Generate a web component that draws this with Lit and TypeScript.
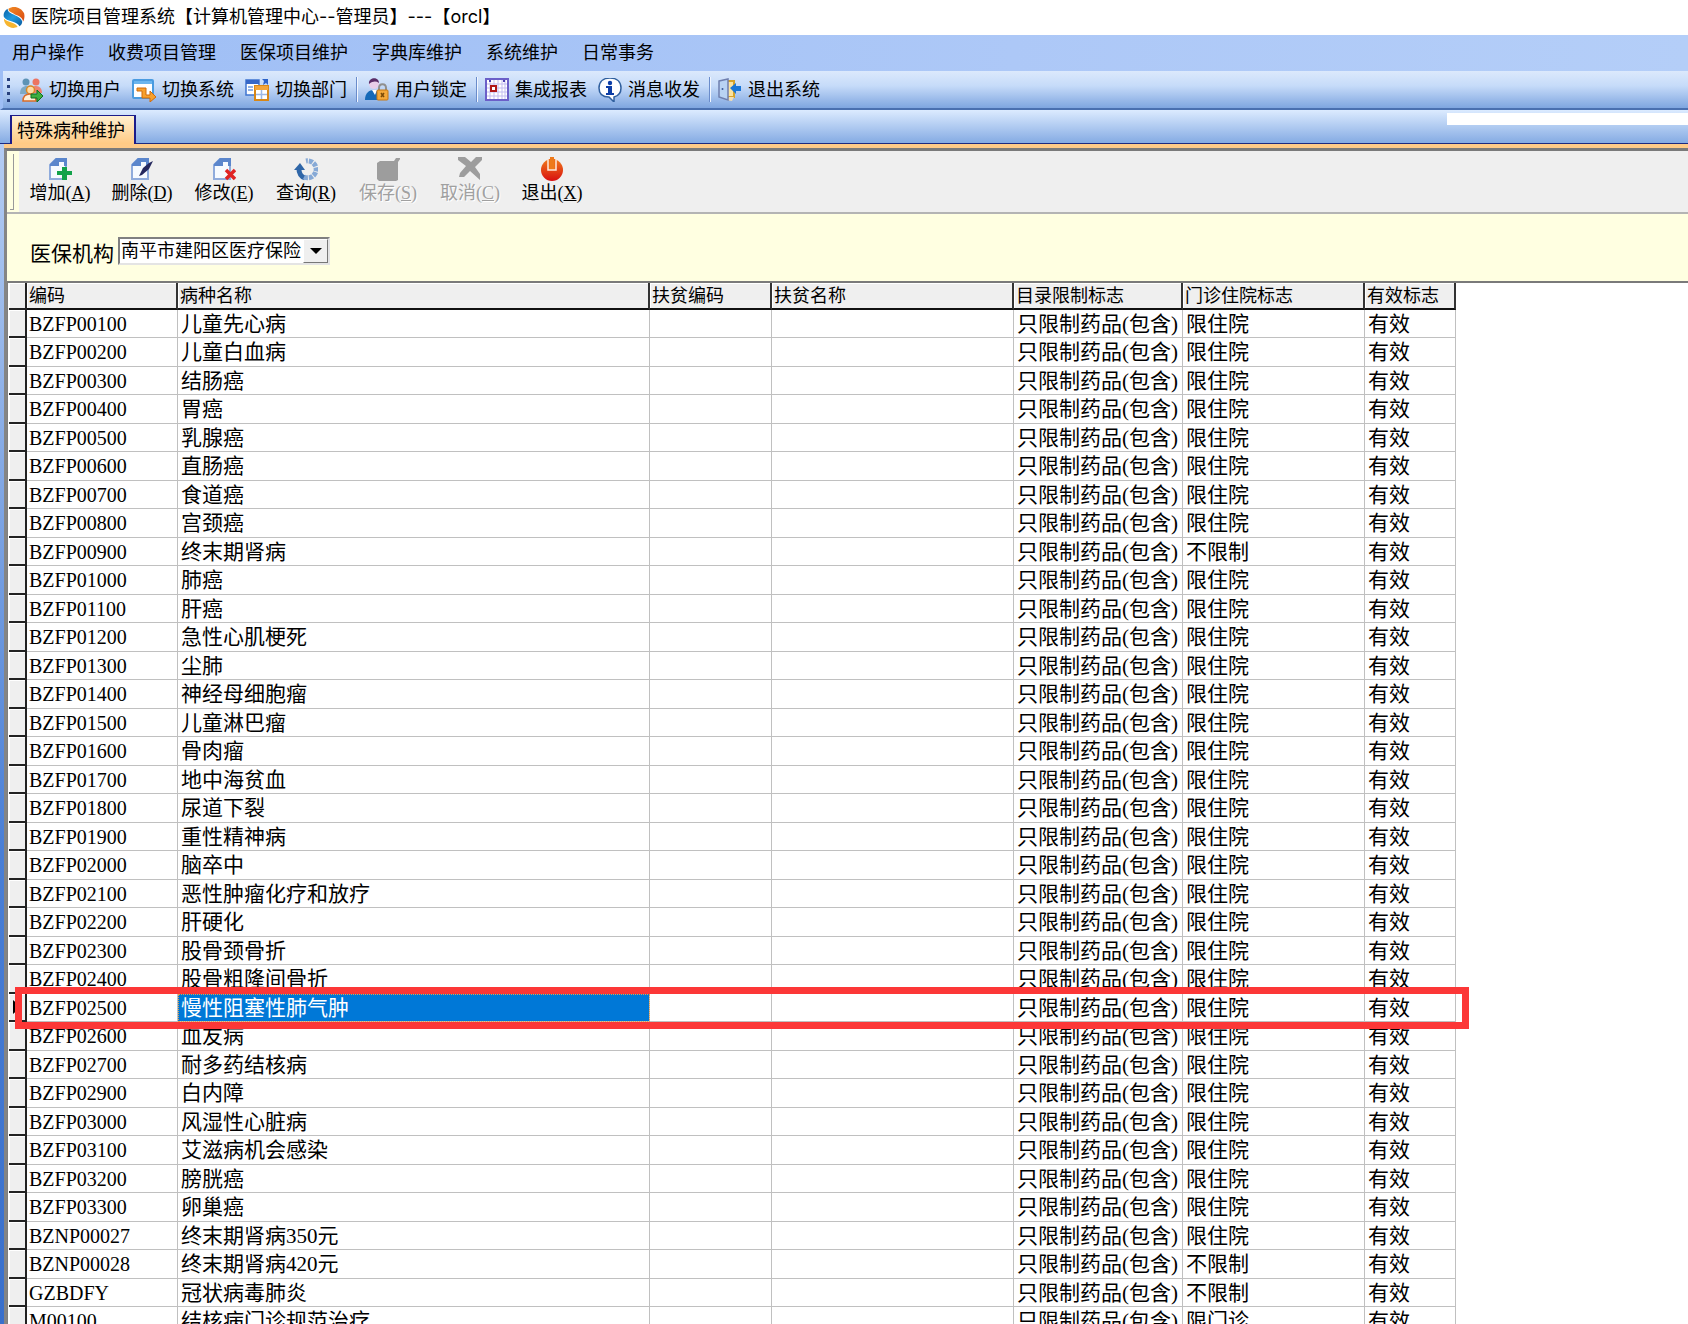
import { LitElement, html, css, svg, nothing } from "lit";
import { customElement, state } from "lit/decorators.js";
import { classMap } from "lit/directives/class-map.js";

type Row = [code: string, name: string, visit: string];

const IN = "限住院";
const ANY = "不限制";

const rows: Row[] = [
  ["BZFP00100", "儿童先心病", IN],
  ["BZFP00200", "儿童白血病", IN],
  ["BZFP00300", "结肠癌", IN],
  ["BZFP00400", "胃癌", IN],
  ["BZFP00500", "乳腺癌", IN],
  ["BZFP00600", "直肠癌", IN],
  ["BZFP00700", "食道癌", IN],
  ["BZFP00800", "宫颈癌", IN],
  ["BZFP00900", "终末期肾病", ANY],
  ["BZFP01000", "肺癌", IN],
  ["BZFP01100", "肝癌", IN],
  ["BZFP01200", "急性心肌梗死", IN],
  ["BZFP01300", "尘肺", IN],
  ["BZFP01400", "神经母细胞瘤", IN],
  ["BZFP01500", "儿童淋巴瘤", IN],
  ["BZFP01600", "骨肉瘤", IN],
  ["BZFP01700", "地中海贫血", IN],
  ["BZFP01800", "尿道下裂", IN],
  ["BZFP01900", "重性精神病", IN],
  ["BZFP02000", "脑卒中", IN],
  ["BZFP02100", "恶性肿瘤化疗和放疗", IN],
  ["BZFP02200", "肝硬化", IN],
  ["BZFP02300", "股骨颈骨折", IN],
  ["BZFP02400", "股骨粗隆间骨折", IN],
  ["BZFP02500", "慢性阻塞性肺气肿", IN],
  ["BZFP02600", "血友病", IN],
  ["BZFP02700", "耐多药结核病", IN],
  ["BZFP02900", "白内障", IN],
  ["BZFP03000", "风湿性心脏病", IN],
  ["BZFP03100", "艾滋病机会感染", IN],
  ["BZFP03200", "膀胱癌", IN],
  ["BZFP03300", "卵巢癌", IN],
  ["BZNP00027", "终末期肾病350元", IN],
  ["BZNP00028", "终末期肾病420元", ANY],
  ["GZBDFY", "冠状病毒肺炎", ANY],
  ["M00100", "结核病门诊规范治疗", "限门诊"],
];

const columns = ["编码", "病种名称", "扶贫编码", "扶贫名称", "目录限制标志", "门诊住院标志", "有效标志"];
const menus = ["用户操作", "收费项目管理", "医保项目维护", "字典库维护", "系统维护", "日常事务"];

const icons = {
  logo: svg`
    <defs>
      <linearGradient id="lo" x1="0" y1="0" x2="1" y2="1"><stop offset="0" stop-color="#f08a24"/><stop offset="1" stop-color="#d94a12"/></linearGradient>
      <linearGradient id="lb" x1="0" y1="0" x2="1" y2="1"><stop offset="0" stop-color="#0a63a8"/><stop offset=".5" stop-color="#1f9be0"/><stop offset="1" stop-color="#0a5a9e"/></linearGradient>
    </defs>
    <path d="M6 3C11-1 20 1 23 8c1 4 0 7-1 9C21 11 15 11 11 8 8 6 6 6 6 3z" fill="url(#lo)"/>
    <path d="M5 3c0 7 14 6 16 14 0 2-1 4-3 5C15 16 5 18 1 12 0 8 2 5 5 3z" fill="url(#lb)"/>
    <path d="M1 14c4 4 13 4 15 9C8 26 1 21 1 14z" fill="#f6b530"/>`,
  users: svg`
    <circle cx="7" cy="4" r="3.500" fill="#5d93b5"/><circle cx="17" cy="4" r="3.500" fill="#ec7461"/>
    <path d="M1 16c0-6 3-8 7-8 3 0 4 2 4 4l-2 4z" fill="#7da9c4"/><path d="M12 12c0-3 2-4 5-4 4 0 6 3 6 7h-8z" fill="#ee8270"/>
    <circle cx="11.500" cy="12" r="4" fill="#ffdca6" stroke="#d98825" stroke-width="1.500"/>
    <path d="M4 23c0-5 3-7 7-7s6 2 6 7z" fill="#fff1d8" stroke="#d96c28" stroke-width="1.500"/>
    <path d="M12 16h6v-4l6 6-6 6v-4h-6z" fill="#3fae3f" stroke="#0f6f22"/>`,
  system: svg`
    <rect x="1" y="2" width="20" height="18" rx="1" fill="#fff" stroke="#4a9be0" stroke-width="2"/><path d="M2 3h18v3H2z" fill="#6bb5ee"/>
    <path d="M5 10h9v7h4v-4l6 6-6 5v-4h-8v-7H5z" fill="#f7a02c" stroke="#cf6a0c"/>`,
  dept: svg`
    <rect x="1" y="2" width="13" height="15" fill="#fff" stroke="#3f74d0" stroke-width="1.500"/><path d="M1 2h13v4H1z" fill="#3667c7"/>
    <path d="M3 9h5M3 12h5" stroke="#6f9be0" stroke-width="1.500"/><path d="M17 1h6v6l-2-2-3 2 1-4z" fill="#2c62c9"/>
    <rect x="10" y="8" width="13" height="14" fill="#fff" stroke="#d88717" stroke-width="2"/><path d="M10 8h13v4H10z" fill="#f3a53a"/>
    <path d="M16.500 12v9M11 16.500h11" stroke="#9db8e4" stroke-width="1.500"/>`,
  lock: svg`
    <circle cx="9" cy="6" r="5" fill="#e9cde8"/><path d="M4 6c-1-7 10-8 10-1-3-2-6-2-10 1z" fill="#5a2c66"/>
    <path d="M0 22c0-7 4-10 9-10s7 2 8 6v4z" fill="#1569b8"/><path d="M7 12h5l-2 5z" fill="#fff"/>
    <path d="M14 13v-3c0-5 7-5 7 0v3" fill="none" stroke="#8f8f8f" stroke-width="2"/>
    <rect x="12" y="12" width="11" height="10" rx="1" fill="#f3a83a" stroke="#c87812"/><path d="M16 15l3 4m0-4l-3 4" stroke="#7a4a08" stroke-width="1.500"/>`,
  report: svg`
    <rect x="1" y="1" width="22" height="21" fill="#fff" stroke="#6b5fc8" stroke-width="2"/>
    <path d="M5 2v19M9 2v19M13 2v19M17 2v19M20 2v19M2 6h20M2 10h20M2 14h20M2 18h20" stroke="#c3bdf0"/>
    <path d="M4 3h2M18 3h2" stroke="#4b3fb0" stroke-width="2"/><rect x="6" y="8" width="5" height="5" fill="#fff" stroke="#b01818" stroke-width="2"/>`,
  info: svg`
    <path d="M12 0c7 0 11 4 11 10s-3 8-7 9v5l-5-5C5 19 1 16 1 10S5 0 12 0z" fill="#fff" stroke="#2f5f9e" stroke-width="1.500"/>
    <circle cx="12" cy="5" r="2.200" fill="#0d3ea6"/><path d="M8 8h6v7h2v2H8v-2h2v-5H8z" fill="#0d3ea6"/>`,
  exitDoor: svg`
    <path d="M7 3h9v16H7z" fill="#fbe3a0" stroke="#d5a32a" stroke-width="2"/><path d="M8 22l3-3h5l-2 4z" fill="#f1dfb5"/>
    <path d="M1 3l9-2v21l-9-3z" fill="#b9d3f3" stroke="#6f7fae" stroke-width="1.500"/><circle cx="4.500" cy="11" r="1" fill="#3a5a9a"/>
    <path d="M12 10l6-5v3h5v5h-5v3z" fill="#1976d8"/>`,
  add: svg`
    <path d="M8 2h10v20H2V8z" fill="#f6faff" stroke="#8fabdc" stroke-width="2"/><path d="M8 1h11v8h-3V5h-5v4H2V7z" fill="#5b86cc"/>
    <path d="M14 10h5v4h5v4h-5v5h-5v-5H9v-4h5z" fill="#12a24a"/>`,
  edit: svg`
    <path d="M8 2h10v20H2V8z" fill="#f6faff" stroke="#8fabdc" stroke-width="2"/><path d="M8 1h11v8h-3V5h-5v4H2V7z" fill="#5b86cc"/>
    <path d="M23 4l-4 8-7 6-3 1 4-8 6-5z" fill="#25285e"/>`,
  remove: svg`
    <path d="M8 2h10v20H2V8z" fill="#f6faff" stroke="#8fabdc" stroke-width="2"/><path d="M8 1h11v8h-3V5h-5v4H2V7z" fill="#5b86cc"/>
    <path d="M14 13l9 9m0-9l-9 9" stroke="#e02424" stroke-width="3.500"/>`,
  query: svg`
    <path d="M11 21A9 9 0 0 1 5 12" fill="none" stroke="#2f66a8" stroke-width="5"/><path d="M0 13l6-7 5 7z" fill="#2f66a8"/>
    <path d="M10 20a8.500 8.500 0 1 0 2-16" fill="none" stroke="#86a9d6" stroke-width="5" stroke-dasharray="4 1"/>`,
  save: svg`<path d="M4 4h14l2-3h5l-3 4v18l-2 1H3l-2-2V6z" fill="#9d9d9d"/>`,
  cancel: svg`<path d="M0 0h7l6 5 5-5h7v2l-8 8 5 7v6l-10-9-6 6H1l1-4 6-7-8-6z" fill="#9d9d9d"/>`,
  power: svg`
    <defs><linearGradient id="pw" x1="0" y1="0" x2="0" y2="1"><stop offset="0" stop-color="#f07a1c"/><stop offset="1" stop-color="#d80f10"/></linearGradient></defs>
    <circle cx="12" cy="13" r="11" fill="url(#pw)"/><path d="M8 2v11h8V2" fill="#ef6e18" stroke="#ffe9dc" stroke-width="1.500"/><path d="M10 0h4v12h-4z" fill="#ee7a1a"/>`,
};

const icon = (name: keyof typeof icons) =>
  html`<svg class="icon" viewBox="0 0 24 24" aria-hidden="true">${icons[name]}</svg>`;

const tools: ([keyof typeof icons, string] | null)[] = [
  ["users", "切换用户"],
  ["system", "切换系统"],
  ["dept", "切换部门"],
  null,
  ["lock", "用户锁定"],
  null,
  ["report", "集成报表"],
  ["info", "消息收发"],
  null,
  ["exitDoor", "退出系统"],
];

const actions: { icon: keyof typeof icons; label: string; key: string; off?: boolean }[] = [
  { icon: "add", label: "增加", key: "A" },
  { icon: "edit", label: "删除", key: "D" },
  { icon: "remove", label: "修改", key: "E" },
  { icon: "query", label: "查询", key: "R" },
  { icon: "save", label: "保存", key: "S", off: true },
  { icon: "cancel", label: "取消", key: "C", off: true },
  { icon: "power", label: "退出", key: "X" },
];

@customElement("app-root")
export class AppRoot extends LitElement {
  @state() private selected = 24;

  static styles = css`
    :host {
      display: flex;
      flex-direction: column;
      height: 100vh;
      overflow: hidden;
      background: #fff;
      color: #000;
      font: 18px/24px "Liberation Serif", "Noto Sans CJK SC", sans-serif;
    }
    * { box-sizing: border-box; }
    button, select { font: inherit; color: inherit; margin: 0; padding: 0; border: 0; background: none; white-space: nowrap; }
    .icon { width: 24px; height: 24px; flex: none; display: block; }

    .title { display: flex; align-items: center; gap: 6px; height: 35px; padding: 0 0 2px 3px; flex: none; font-family: Inter, "Noto Sans CJK SC", sans-serif; }
    .title h1 { margin: 0; font-size: 18px; font-weight: 400; white-space: nowrap; }
    .title .icon { width: 22px; height: 22px; }

    .menu { display: flex; align-items: center; gap: 24px; height: 36px; padding: 0 12px; flex: none; background: linear-gradient(90deg, #9ebef5, #adc8f7 60%, #b4cef8); }

    .tools { display: flex; align-items: center; height: 39px; padding-left: 4px; flex: none; border-bottom: 2px solid #4a70b0; border-left: 3px solid #9ebef5; background: linear-gradient(#dce9fc, #c6dbf9 40%, #7fa6e0); }
    .grip { width: 3px; height: 24px; margin-right: 9px; background: repeating-linear-gradient(#27407e 0 3px, transparent 3px 7px); }
    .tool { display: flex; align-items: center; gap: 6px; }
    .tool + .tool { margin-left: 11px; }
    .sep { width: 2px; height: 25px; margin: 0 7px 0 9px; border-left: 1px solid #6a8ccb; border-right: 1px solid #f1f6ff; }

    .tabs { display: flex; align-items: flex-end; justify-content: space-between; height: 34px; padding-left: 10px; flex: none; border-bottom: 1px solid #1c2a80; background: linear-gradient(#dcebff, #85abe3); }
    .tab { height: 29px; padding: 2px 9px 0 5px; margin-bottom: -1px; border: 2px solid #1c1c8a; border-width: 1px 2px 0; background: linear-gradient(#fff0d0, #ffca84); }
    .strip { width: 241px; height: 12px; margin-bottom: 18px; background: #fff; }

    .frame { flex: 1; min-height: 0; display: flex; flex-direction: column; padding-left: 4px; background: linear-gradient(#b5cdf3, #4a7fd6 60%, #3a70cc); }
    .inner { flex: 1; min-height: 0; display: flex; flex-direction: column; border-left: 3px solid #858585; border-top: 3px solid #7a7a7a; }
    .band { height: 4px; flex: none; background: #ffcb88; }
    .actions { display: flex; height: 63px; flex: none; border-bottom: 2px solid #b4b4b4; background: #efefef; }
    .handle { width: 12px; padding: 3px 4px 3px 3px; background: #ffffe1; }
    .handle i { display: block; width: 4px; height: 56px; border-right: 1px solid #999; border-bottom: 1px solid #999; }
    .action { width: 82px; display: flex; flex-direction: column; align-items: center; padding-top: 6px; line-height: 20px; }
    .action span { white-space: nowrap; padding-top: 2px; }
    .action:disabled { color: #a0a0a0; text-shadow: 1px 1px #fff; }
    .filter { display: flex; align-items: center; height: 67px; padding-left: 23px; gap: 4px; flex: none; background: #ffffe1; }
    .filter label { font-size: 21px; padding-top: 12px; }
    .combo { position: relative; width: 212px; height: 28px; margin-top: 6px; border: 2px solid; border-color: #808080 #e4e4e4 #e4e4e4 #808080; background: #fff; }
    .combo select { width: 100%; height: 24px; padding-left: 1px; appearance: none; line-height: 24px; outline: 0; overflow: hidden; }
    .arrow { position: absolute; right: 0; top: 0; width: 25px; height: 24px; display: grid; place-items: center; pointer-events: none; background: #efefef; border: 1px solid; border-color: #fff #777 #777 #fff; }
    .arrow svg { width: 12px; height: 6px; }

    .grid { flex: 1; min-height: 0; overflow: auto; scrollbar-width: none; padding-left: 1px; border-top: 2px solid #7a7a7a; border-left: 1px solid #808080; background: #fff; }
    table { table-layout: fixed; border-collapse: separate; border-spacing: 0; width: 1447px; font-size: 21px; line-height: 26px; }
    .c0 { width: 18px; } .c1 { width: 151px; } .c2 { width: 472px; } .c3 { width: 122px; }
    .c4 { width: 242px; } .c5 { width: 169px; } .c6 { width: 182px; } .c7 { width: 91px; }
    th, td { padding: 0 0 0 3px; text-align: left; font-weight: 400; white-space: nowrap; overflow: hidden; }
    thead th { height: 27px; padding: 2px 0 0 2px; font-size: 18px; line-height: 23px; background: #efefef; border-right: 2px solid #333; border-bottom: 2px solid #111; box-shadow: inset 1px 1px #fff; }
    tbody tr { height: 28px; position: relative; }
    tbody tr:nth-child(even) { height: 29px; }
    tbody tr.on { z-index: 1; }
    td { border-right: 1px solid #c0c0c0; border-bottom: 1px solid #c0c0c0; }
    .code { font-size: 20px; padding-left: 2px; }
    .mark { padding: 0; background: #efefef; border-right: 2px solid #222; border-bottom: 2px solid #222; box-shadow: inset 1px 1px #fff; }
    .mark svg { display: block; width: 8px; height: 14px; margin-left: 4px; }
    .picked { background: #0078d7; color: #fff; outline: 1px dotted #e0a050; outline-offset: -1px; }
    .callout { position: absolute; left: 6px; right: -13px; top: -7px; bottom: -7px; border: 7px solid #fc3737; pointer-events: none; }
  `;

  render() {
    return html`
      <header class="title">${icon("logo")}<h1>医院项目管理系统【计算机管理中心--管理员】---【orcl】</h1></header>
      <nav class="menu">${menus.map((m) => html`<button>${m}</button>`)}</nav>
      <div class="tools">
        <span class="grip"></span>
        ${tools.map((t) => (t ? html`<button class="tool">${icon(t[0])}${t[1]}</button>` : html`<span class="sep"></span>`))}
      </div>
      <div class="tabs"><button class="tab">特殊病种维护</button><span class="strip"></span></div>
      <main class="frame">
        <div class="band"></div>
        <div class="inner">
          <div class="actions">
            <span class="handle"><i></i></span>
            ${actions.map((a) => html`
              <button class="action" ?disabled=${!!a.off}>${icon(a.icon)}<span>${a.label}(<u>${a.key}</u>)</span></button>`)}
          </div>
          <div class="filter">
            <label for="org">医保机构</label>
            <div class="combo">
              <select id="org"><option>南平市建阳区医疗保险</option></select>
              <span class="arrow"><svg viewBox="0 0 12 6"><path d="M0 0h12L6 6z"/></svg></span>
            </div>
          </div>
          <div class="grid">
            <table>
              <colgroup>${[0, 1, 2, 3, 4, 5, 6, 7].map((n) => html`<col class="c${n}" />`)}</colgroup>
              <thead><tr><th class="mark"></th>${columns.map((c) => html`<th scope="col">${c}</th>`)}</tr></thead>
              <tbody>${rows.map((r, i) => this.row(r, i))}</tbody>
            </table>
          </div>
        </div>
      </main>`;
  }

  private row([code, name, visit]: Row, i: number) {
    const on = i === this.selected;
    return html`
      <tr class=${classMap({ on })} @click=${() => (this.selected = i)}>
        <th class="mark">${on ? html`<svg viewBox="0 0 8 14"><path d="M0 0l8 7-8 7z"/></svg>` : nothing}</th>
        <td class="code">${code}</td>
        <td class=${classMap({ picked: on })}>${name}</td>
        <td></td>
        <td></td>
        <td>只限制药品(包含)</td>
        <td>${visit}</td>
        <td>有效${on ? html`<span class="callout"></span>` : nothing}</td>
      </tr>`;
  }
}
